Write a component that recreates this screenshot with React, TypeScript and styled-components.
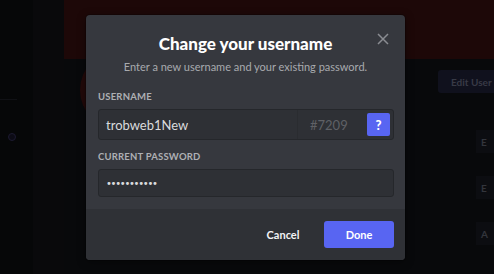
import React from "react";
import styled, { createGlobalStyle } from "styled-components";

const Global = createGlobalStyle`
  html, body { margin: 0; padding: 0; background: #08090b; }
  body { font-family: Lato, "Noto Sans", sans-serif; overflow: hidden; }
  * { box-sizing: border-box; }
`;

const Page = styled.div`
  width: 494px;
  height: 274px;
  display: flex;
  position: relative;
  overflow: hidden;
  background: #08090b;
`;

const Rail = styled.div`
  width: 33px;
  background: #060708;
  display: flex;
  flex-direction: column;
  align-items: center;
  padding-top: 99px;
`;

const RailLine = styled.div`
  width: 17px;
  height: 1px;
  align-self: flex-start;
  background: #101115;
`;

const RailIcon = styled.div`
  width: 8px;
  height: 8px;
  margin: 33px 0 0 -10px;
  border-radius: 50%;
  border: 1px solid #1c1a30;
  background: #0c0b15;
`;

const Sidebar = styled.div`
  width: 31px;
  background: #09090b;
`;

const Main = styled.div`
  flex: 1;
  display: flex;
  flex-direction: column;
  position: relative;
`;

const Banner = styled.div`
  height: 59px;
  background: #1d0808;
`;

const Avatar = styled.div`
  position: absolute;
  left: 16px;
  top: 50px;
  width: 80px;
  height: 80px;
  border-radius: 50%;
  background: #220909;
`;

const ProfileRow = styled.div`
  display: flex;
  justify-content: flex-end;
  padding-top: 11px;
`;

const EditButton = styled.div`
  width: 56px;
  height: 23px;
  border-radius: 3px 0 0 3px;
  background: #10111d;
  color: #383a46;
  font-size: 10px;
  font-weight: 700;
  display: flex;
  align-items: center;
  padding-left: 13px;
  white-space: nowrap;
  overflow: hidden;
`;

const SideButtons = styled.div`
  display: flex;
  flex-direction: column;
  align-items: flex-end;
  gap: 23px;
  margin-top: 37px;
`;

const SideButton = styled.div`
  width: 18px;
  height: 23px;
  background: #0c0d11;
  color: #33353c;
  font-size: 10px;
  font-weight: 700;
  display: flex;
  align-items: center;
  padding-left: 5px;
`;

const Modal = styled.div`
  position: absolute;
  left: 86px;
  top: 15px;
  width: 319px;
  height: 245px;
  border-radius: 4px;
  background: #36383e;
  box-shadow: 0 0 0 1px rgba(0,0,0,0.2), 0 2px 10px rgba(0,0,0,0.4);
  display: flex;
  flex-direction: column;
  overflow: hidden;
`;

const Header = styled.div`
  display: flex;
  flex-direction: column;
  align-items: center;
  padding-top: 18px;
`;

const Title = styled.h2`
  margin: 0;
  font-size: 17px;
  line-height: 22px;
  font-weight: 900;
  color: #ffffff;
`;

const Subtitle = styled.p`
  margin: 5px 0 0;
  font-size: 11px;
  line-height: 14px;
  color: #a8aaae;
`;

const Close = styled.button`
  position: absolute;
  top: 17px;
  right: 15px;
  width: 14px;
  height: 14px;
  padding: 0;
  border: none;
  background: none;
  color: #8a8c91;
  display: flex;
  align-items: center;
  justify-content: center;
`;

const Body = styled.div`
  flex: 1;
  padding: 0 11px 0 12px;
  display: flex;
  flex-direction: column;
`;

const Label = styled.div<{ $top: number }>`
  margin-top: ${(p) => p.$top}px;
  font-size: 9.5px;
  line-height: 12px;
  font-weight: 700;
  color: #aeb0b4;
  letter-spacing: 0.2px;
`;

const InputBox = styled.div<{ $h: number }>`
  margin-top: 6px;
  height: ${(p) => p.$h}px;
  border-radius: 3px;
  background: #2e3035;
  border: 1px solid #25272b;
  display: flex;
  align-items: center;
`;

const InputText = styled.div`
  flex: 1;
  padding-left: 7px;
  font-size: 13px;
  color: #dadbdd;
`;

const Dots = styled.div`
  flex: 1;
  padding-left: 7px;
  font-size: 10px;
  letter-spacing: -1.3px;
  color: #dadbdd;
  font-family: "DejaVu Sans", sans-serif;
`;

const Discrim = styled.div`
  width: 70px;
  align-self: stretch;
  border-left: 1px solid #2a2c30;
  display: flex;
  align-items: center;
  padding-left: 12px;
  font-size: 13px;
  color: #5f6166;
`;

const HelpButton = styled.div`
  width: 23px;
  height: 23px;
  margin-right: 3px;
  border-radius: 2px;
  background: #5865f2;
  color: #ffffff;
  font-size: 13px;
  font-weight: 900;
  display: flex;
  align-items: center;
  justify-content: center;
`;

const Footer = styled.div`
  margin-top: 12px;
  height: 51px;
  background: #2f3136;
  display: flex;
  align-items: center;
  justify-content: flex-end;
  padding: 0 11px 0 12px;
  gap: 6px;
`;

const TextButton = styled.div`
  width: 70px;
  text-align: center;
  font-size: 11px;
  font-weight: 700;
  color: #f2f3f5;
`;

const PrimaryButton = styled.div`
  width: 70px;
  height: 27px;
  border-radius: 3px;
  background: #5865f2;
  color: #ffffff;
  font-size: 11px;
  font-weight: 700;
  display: flex;
  align-items: center;
  justify-content: center;
`;

export default function App() {
  return (
    <>
      <Global />
      <Page>
        <Rail>
          <RailLine />
          <RailIcon />
        </Rail>
        <Sidebar />
        <Main>
          <Banner />
          <Avatar />
          <ProfileRow>
            <EditButton>Edit User Profile</EditButton>
          </ProfileRow>
          <SideButtons>
            <SideButton>E</SideButton>
            <SideButton>E</SideButton>
            <SideButton>A</SideButton>
          </SideButtons>
        </Main>
        <Modal>
          <Header>
            <Title>Change your username</Title>
            <Subtitle>Enter a new username and your existing password.</Subtitle>
          </Header>
          <Close aria-label="Close">
            <svg width="12" height="12" viewBox="0 0 12 12">
              <path d="M1 1L11 11M11 1L1 11" stroke="currentColor" strokeWidth="1.5" />
            </svg>
          </Close>
          <Body>
            <Label $top={17}>USERNAME</Label>
            <InputBox $h={31}>
              <InputText>trobweb1New</InputText>
              <Discrim>#7209</Discrim>
              <HelpButton>?</HelpButton>
            </InputBox>
            <Label $top={11}>CURRENT PASSWORD</Label>
            <InputBox $h={28}>
              <Dots>•••••••••••</Dots>
            </InputBox>
          </Body>
          <Footer>
            <TextButton>Cancel</TextButton>
            <PrimaryButton>Done</PrimaryButton>
          </Footer>
        </Modal>
      </Page>
    </>
  );
}
